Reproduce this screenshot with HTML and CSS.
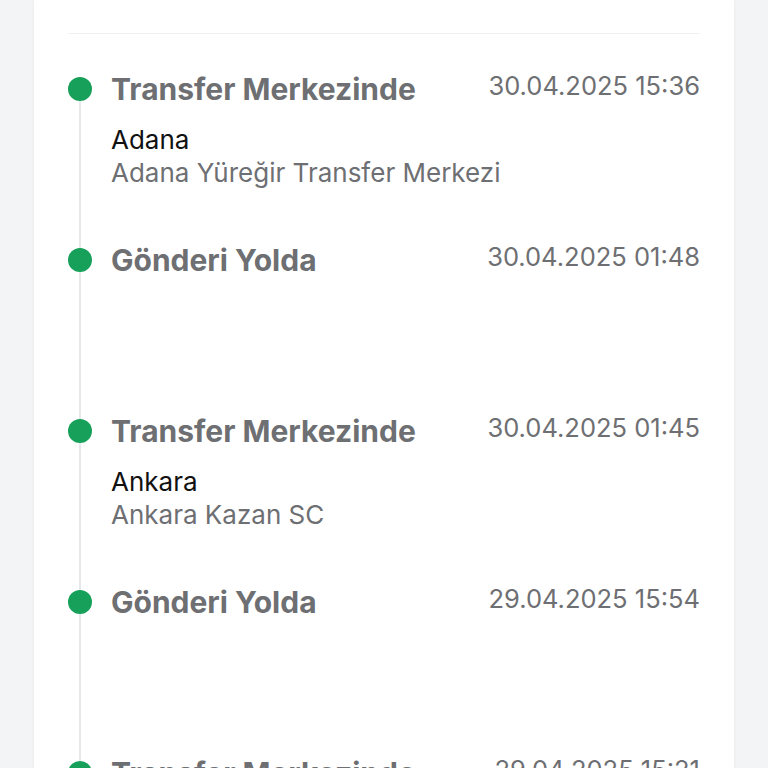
FILE: index.html
```html
<!DOCTYPE html>
<html>
  <head>
    <meta name="viewport" content="width=device-width,initial-scale=1.0">
    <title>Gönderi Takibi</title>
    <link rel="stylesheet" href="styles.css">
  </head>
  <body>
    <section class="card">
      <hr class="divider">
      <ul class="timeline">
        <li class="event">
          <div class="rail"><span class="dot"></span><span class="stem"></span></div>
          <div class="eventBody">
            <div class="eventHead">
              <h3 class="eventTitle">Transfer Merkezinde</h3>
              <span class="eventDate">30.04.2025 15:36</span>
            </div>
            <p class="eventCity">Adana</p>
            <p class="eventPlace">Adana Yüreğir Transfer Merkezi</p>
          </div>
        </li>
        <li class="event">
          <div class="rail"><span class="dot"></span><span class="stem"></span></div>
          <div class="eventBody">
            <div class="eventHead">
              <h3 class="eventTitle">Gönderi Yolda</h3>
              <span class="eventDate">30.04.2025 01:48</span>
            </div>
          </div>
        </li>
        <li class="event">
          <div class="rail"><span class="dot"></span><span class="stem"></span></div>
          <div class="eventBody">
            <div class="eventHead">
              <h3 class="eventTitle">Transfer Merkezinde</h3>
              <span class="eventDate">30.04.2025 01:45</span>
            </div>
            <p class="eventCity">Ankara</p>
            <p class="eventPlace">Ankara Kazan SC</p>
          </div>
        </li>
        <li class="event">
          <div class="rail"><span class="dot"></span><span class="stem"></span></div>
          <div class="eventBody">
            <div class="eventHead">
              <h3 class="eventTitle">Gönderi Yolda</h3>
              <span class="eventDate">29.04.2025 15:54</span>
            </div>
          </div>
        </li>
        <li class="event">
          <div class="rail"><span class="dot"></span><span class="stem"></span></div>
          <div class="eventBody">
            <div class="eventHead">
              <h3 class="eventTitle">Transfer Merkezinde</h3>
              <span class="eventDate">29.04.2025 15:21</span>
            </div>
          </div>
        </li>
      </ul>
    </section>
  </body>
</html>
```
FILE: styles.css
```css
body{
  margin: 0;
  padding: 0 34px;
  background-color: #f3f4f6;
  font-family: Inter, "Noto Sans", sans-serif;
  overflow: hidden;
}
.card{
  background-color: #ffffff;
  padding: 33px 34px 0px 34px;
  box-shadow: rgba(0, 0, 0, 0.06) 0px 0px 3px;
  min-height: 768px;
}
.divider{
  margin: 0;
  border: none;
  border-top: 1px solid #eef0f2;
}
.timeline{
  list-style: none;
  margin: 0;
  padding: 43px 0px 0px 0px;
}
.event{
  display: flex;
  gap: 19px;
  min-height: 171px;
}
.rail{
  width: 24px;
  display: flex;
  flex-direction: column;
  align-items: center;
  flex-shrink: 0;
}
.dot{
  width: 24px;
  height: 24px;
  border-radius: 50%;
  background-color: #16a05a;
}
.stem{
  flex: 1;
  width: 2px;
  background-color: #e5e7eb;
}
.eventBody{
  flex: 1;
}
.eventHead{
  display: flex;
  justify-content: space-between;
  align-items: flex-start;
}
.eventTitle{
  margin: 0;
  font-size: 30px;
  font-weight: 700;
  line-height: 24px;
  color: #6e6f73;
}
.eventDate{
  font-size: 25.5px;
  line-height: 17px;
  color: #6e6f73;
}
.eventCity{
  margin: 22px 0px 0px 0px;
  font-size: 26px;
  line-height: 33px;
  color: #111111;
}
.eventPlace{
  margin: 0;
  font-size: 26px;
  line-height: 33px;
  color: #6e6f73;
}
```
